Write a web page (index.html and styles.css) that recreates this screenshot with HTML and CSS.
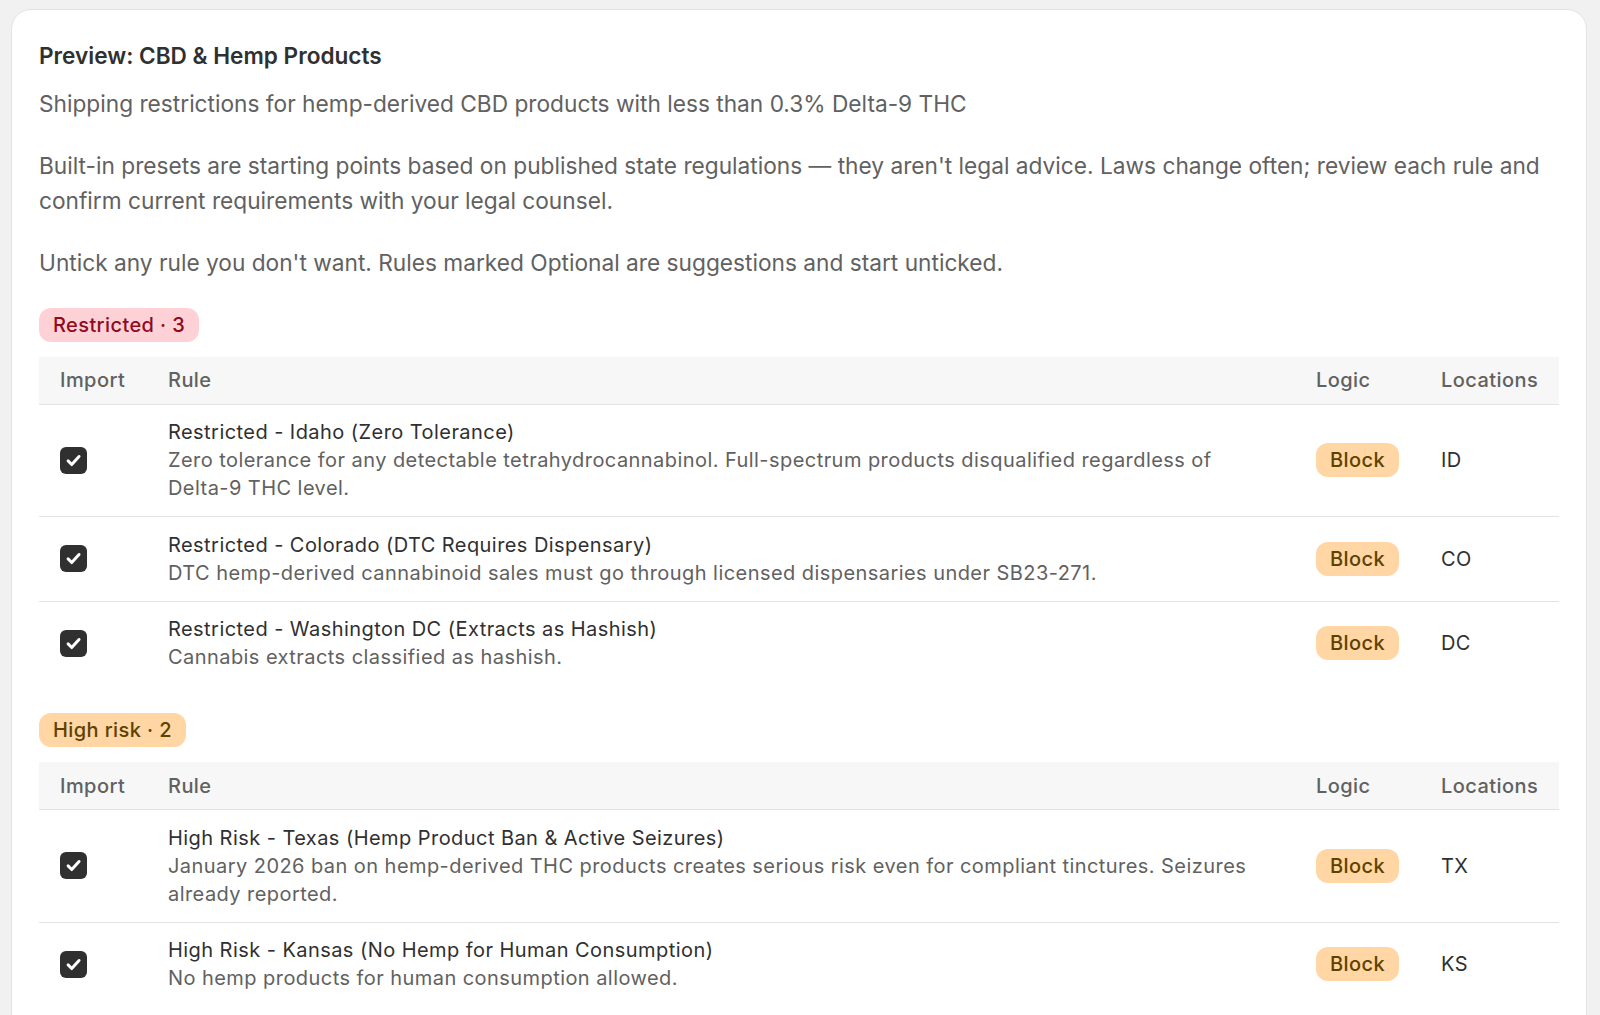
FILE: index.html
```html
<!DOCTYPE html>
<html lang="en">
<head>
<meta charset="utf-8">
<title>Preview: CBD &amp; Hemp Products</title>
<link rel="stylesheet" href="styles.css">
</head>
<body>
<div class="card">
  <h2 class="title">Preview: CBD &amp; Hemp Products</h2>
  <p class="subtitle">Shipping restrictions for hemp-derived CBD products with less than 0.3% Delta-9 THC</p>
  <div class="notes">
    <p>Built-in presets are starting points based on published state regulations — they aren't legal advice. Laws change often; review each rule and confirm current requirements with your legal counsel.</p>
    <p>Untick any rule you don't want. Rules marked Optional are suggestions and start unticked.</p>
  </div>

  <section class="group">
    <span class="pill pill-critical">Restricted · 3</span>
    <table class="rules">
      <colgroup><col class="c-import"><col><col class="c-logic"><col class="c-loc"></colgroup>
      <thead>
        <tr><th>Import</th><th>Rule</th><th>Logic</th><th>Locations</th></tr>
      </thead>
      <tbody>
        <tr>
          <td><span class="check"><svg viewBox="0 0 20 20"><path d="M6 10.3l2.7 2.7 5.4-6"/></svg></span></td>
          <td><div class="rule-name">Restricted - Idaho (Zero Tolerance)</div><div class="rule-desc">Zero tolerance for any detectable tetrahydrocannabinol. Full-spectrum products disqualified regardless of Delta-9 THC level.</div></td>
          <td><span class="pill pill-warn">Block</span></td>
          <td class="loc">ID</td>
        </tr>
        <tr>
          <td><span class="check"><svg viewBox="0 0 20 20"><path d="M6 10.3l2.7 2.7 5.4-6"/></svg></span></td>
          <td><div class="rule-name">Restricted - Colorado (DTC Requires Dispensary)</div><div class="rule-desc">DTC hemp-derived cannabinoid sales must go through licensed dispensaries under SB23-271.</div></td>
          <td><span class="pill pill-warn">Block</span></td>
          <td class="loc">CO</td>
        </tr>
        <tr>
          <td><span class="check"><svg viewBox="0 0 20 20"><path d="M6 10.3l2.7 2.7 5.4-6"/></svg></span></td>
          <td><div class="rule-name">Restricted - Washington DC (Extracts as Hashish)</div><div class="rule-desc">Cannabis extracts classified as hashish.</div></td>
          <td><span class="pill pill-warn">Block</span></td>
          <td class="loc">DC</td>
        </tr>
      </tbody>
    </table>
  </section>

  <section class="group">
    <span class="pill pill-warn">High risk · 2</span>
    <table class="rules">
      <colgroup><col class="c-import"><col><col class="c-logic"><col class="c-loc"></colgroup>
      <thead>
        <tr><th>Import</th><th>Rule</th><th>Logic</th><th>Locations</th></tr>
      </thead>
      <tbody>
        <tr>
          <td><span class="check"><svg viewBox="0 0 20 20"><path d="M6 10.3l2.7 2.7 5.4-6"/></svg></span></td>
          <td><div class="rule-name">High Risk - Texas (Hemp Product Ban &amp; Active Seizures)</div><div class="rule-desc">January 2026 ban on hemp-derived THC products creates serious risk even for compliant tinctures. Seizures already reported.</div></td>
          <td><span class="pill pill-warn">Block</span></td>
          <td class="loc">TX</td>
        </tr>
        <tr>
          <td><span class="check"><svg viewBox="0 0 20 20"><path d="M6 10.3l2.7 2.7 5.4-6"/></svg></span></td>
          <td><div class="rule-name">High Risk - Kansas (No Hemp for Human Consumption)</div><div class="rule-desc">No hemp products for human consumption allowed.</div></td>
          <td><span class="pill pill-warn">Block</span></td>
          <td class="loc">KS</td>
        </tr>
      </tbody>
    </table>
  </section>
</div>
</body>
</html>
```

FILE: styles.css
```css
html, body {
  margin: 0;
  padding: 0;
  background: #f1f1f1;
}
body {
  font-family: Inter, "Noto Sans", "Liberation Sans", sans-serif;
  font-size: 20px;
  color: #303030;
  padding: 9px 13px 0 11px;
}
.card {
  background: #ffffff;
  border: 1px solid #e3e3e3;
  border-radius: 20px;
  padding: 28px 27px 40px 27px;
}
.title {
  margin: 0;
  font-size: 22.6px;
  line-height: 35px;
  font-weight: 600;
  color: #303030;
}
.subtitle {
  margin: 14px 0 0;
  font-size: 22.7px;
  line-height: 34.5px;
  color: #616161;
}
.notes {
  margin-top: 26px;
  display: flex;
  flex-direction: column;
  gap: 27px;
}
.notes p {
  margin: 0;
  font-size: 22.7px;
  line-height: 35px;
  color: #616161;
}
.group {
  margin-top: 28px;
  display: flex;
  flex-direction: column;
  align-items: flex-start;
  gap: 15px;
}
.group + .group {
  margin-top: 28px;
}
.pill {
  display: inline-block;
  padding: 3px 14px;
  border-radius: 12px;
  line-height: 28px;
  font-size: 20px;
  font-weight: 500;
  letter-spacing: 0.4px;
  white-space: nowrap;
}
.pill-critical {
  background: #fed1d7;
  color: #8e0b21;
}
.pill-warn {
  background: #ffd6a4;
  color: #5e4200;
}
.rules {
  width: 100%;
  border-collapse: collapse;
  table-layout: fixed;
  letter-spacing: 0.44px;
}
.c-import { width: 109px; }
.c-logic { width: 125px; }
.c-loc { width: 138px; }
.rules th {
  background: #f7f7f7;
  color: #616161;
  font-weight: 500;
  text-align: left;
  padding: 9.5px 20px;
  line-height: 28px;
  border-bottom: 1px solid #e3e3e3;
}
.rules th:first-child,
.rules td:first-child {
  padding-left: 21px;
}
.rules td {
  padding: 13.75px 20px;
  line-height: 28px;
  vertical-align: middle;
  border-bottom: 1px solid #e3e3e3;
}
.rules tbody tr:last-child td {
  border-bottom: none;
}
.check {
  display: block;
  width: 27px;
  height: 27px;
  border-radius: 6px;
  background: #303030;
}
.check svg {
  display: block;
  width: 27px;
  height: 27px;
  fill: none;
  stroke: #ffffff;
  stroke-width: 2.2;
  stroke-linecap: round;
  stroke-linejoin: round;
}
.rule-name {
  color: #303030;
}
.rule-desc {
  color: #616161;
}
.loc {
  color: #303030;
}
```
